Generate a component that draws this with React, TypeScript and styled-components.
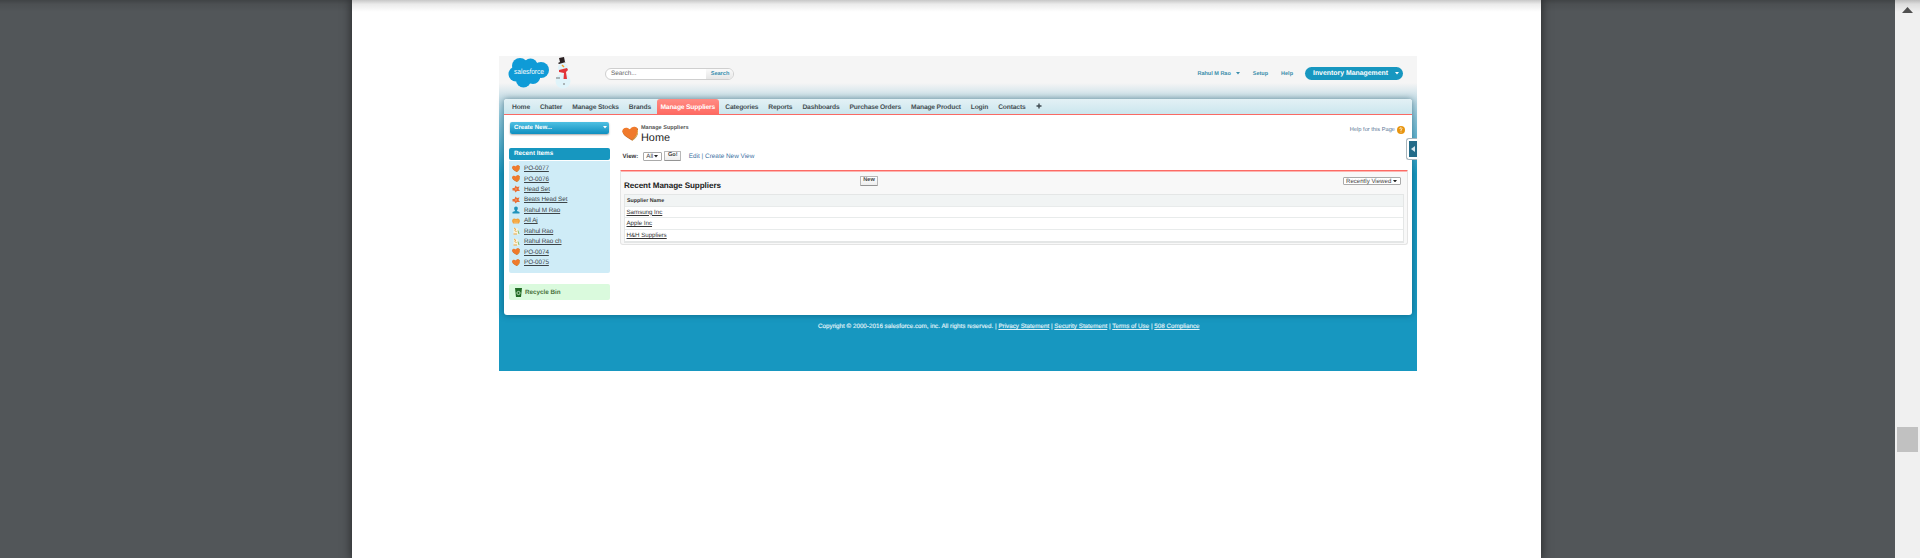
import React from 'react';
import styled, { createGlobalStyle, css } from 'styled-components';

const Global = createGlobalStyle`
  * { box-sizing: border-box; }
  body { margin: 0; background: #525659; overflow: hidden; font-family: "Liberation Sans", Arial, sans-serif; text-rendering: geometricPrecision; }
  a { color: inherit; text-decoration: underline; }
`;

const Viewer = styled.div`
  position: relative; display: flex; width: 1920px; height: 558px; background: #525659; overflow: hidden;
`;
const TopShade = styled.div`
  position: absolute; left: 0; top: 0; width: 1920px; height: 12px; pointer-events: none;
  background: linear-gradient(rgba(0,0,0,.22), rgba(0,0,0,.08) 35%, rgba(0,0,0,0));
`;
const Sheet = styled.div`
  margin-left: 352px; width: 1189px; height: 558px; background: #fff; padding: 56px 0 0 147px;
  box-shadow: 0 0 9px 1px rgba(0,0,0,.5);
`;
const Scrollbar = styled.div`
  margin-left: auto; width: 25px; height: 558px; background: #f0f0f0; display: flex; flex-direction: column; align-items: center; padding-top: 7px;
`;
const Thumb = styled.div` width: 21px; height: 25px; margin-top: 414px; background: #c1c1c1; `;

const Shot = styled.div`
  width: 918px; height: 315px; padding: 0 5px; display: flex; flex-direction: column;
  background: linear-gradient(#f5f5f5 0, #f5f5f5 27px, #c4dde6 43px, #8bc4d9 62px, #1797c0 118px);
`;
const Header = styled.header` display: flex; height: 43px; flex: none; align-items: flex-start; padding-left: 4px; `;
const Snow = styled.svg` margin-left: 4px; flex: none; `;
const Search = styled.div`
  display: flex; width: 129px; height: 12px; margin: 12px 0 0 33px; border: 1px solid #cfcfcf; border-radius: 6px; overflow: hidden;
  background: #fff; font-size: 6.4px; line-height: 10.5px; color: #666; padding-left: 5px;
`;
const SearchButton = styled.div`
  margin-left: auto; width: 27px; text-align: center; background: linear-gradient(#fafafa, #e6e6e6);
  font-size: 5.6px; font-weight: bold; color: #3a8fb0; padding-left: 1px;
`;
const UserLinks = styled.div`
  display: flex; align-items: center; margin: 11px 9px 0 auto; height: 13px; font-size: 5.5px; font-weight: bold; color: #3b8dab;
`;
const CaretSvg = styled.svg<{ $ml: number }>` flex: none; margin-left: ${p => p.$ml}px; `;
const Caret = ({ color, ml = 0 }: { color: string; ml?: number }) => (
  <CaretSvg $ml={ml} width="4" height="2.500" viewBox="0 0 4 2.500"><path d="M0 0H4L2 2.500Z" fill={color} /></CaretSvg>
);
const UserLink = styled.span<{ $ml: number }>` margin-left: ${p => p.$ml}px; `;
const AppPill = styled.div`
  display: flex; align-items: center; width: 98px; height: 13px; margin-left: 12px; padding-left: 8px; border-radius: 7px;
  background: #1797c0; color: #fff; font-size: 6.9px;
`;

const Frame = styled.div`
  height: 216px; flex: none; display: flex; flex-direction: column; border-radius: 3px; background: #fff;
  box-shadow: 0 0 6px rgba(0,50,70,.5);
`;
const Nav = styled.nav`
  display: flex; height: 16px; flex: none; padding: 0 0 0 3px; align-items: stretch; border-bottom: 1px solid #f96a64;
  border-radius: 3px 3px 0 0; background: linear-gradient(#e3f1f5, #cbe6ee);
`;
const Tab = styled.div<{ $active?: boolean }>`
  padding: 0 5px; line-height: 17px; font-size: 6.7px; letter-spacing: -.16px; font-weight: bold; color: #454f54; white-space: nowrap;
  ${p => p.$active && css`
    color: #fff; background: linear-gradient(#ff8c84, #ff6a62); border-radius: 3px 3px 0 0; margin: 0 1.5px 0 .8px; padding: 0 3.7px;
  `}
`;
const Columns = styled.div` display: flex; flex: 1; `;
const Side = styled.aside` width: 116px; flex: none; padding: 7px 0 0 5px; `;
const CreateNew = styled.div`
  display: flex; align-items: center; justify-content: space-between; width: 99px; height: 12px; margin-left: 1px; padding: 0 2px 1px 4px; border-radius: 2px;
  background: linear-gradient(#4fc0e2, #0e8fc0); color: #fff; font-size: 6.1px; font-weight: bold; box-shadow: 0 1px 2px rgba(0,0,0,.35);
`;
const RecentHead = styled.h2`
  width: 101px; height: 12px; margin: 14px 0 0; padding-left: 5px; border-radius: 2px; background: #1797c0;
  color: #fff; font-size: 6.3px; line-height: 12px;
`;
const RecentList = styled.ul`
  list-style: none; width: 101px; height: 112px; margin: 1px 0 0; padding: 2.4px 0 0 3px; border-radius: 0 0 2px 2px; background: #cfecf7;
`;
const RecentItem = styled.li`
  display: flex; align-items: center; gap: 4px; height: 10.45px; font-size: 6.35px; letter-spacing: -.08px; color: #3c4448; white-space: nowrap;
`;
const Recycle = styled.div`
  display: flex; align-items: center; gap: 3px; width: 101px; height: 16px; margin-top: 11px; padding: 1px 0 0 6px; border-radius: 2px;
  background: #dafadd; color: #4a7340; font-size: 6.3px; font-weight: bold;
`;
const Main = styled.main` flex: 1; min-width: 0; padding-right: 4px; `;
const TitleRow = styled.div` display: flex; height: 36px; padding: 9px 3px 0 1.5px; `;
const HeartSlot = styled.div` display: flex; padding-top: 2px; `;
const Titles = styled.div` margin-left: 3px; color: #222; `;
const Kicker = styled.div` font-size: 5.55px; line-height: 8.5px; font-weight: bold; color: #555; `;
const Title = styled.h1` margin: 0; font-size: 10.9px; line-height: 10.5px; font-weight: normal; `;
const HelpLink = styled.div`
  display: flex; align-items: center; gap: 2px; height: 11px; margin-left: auto; font-size: 5.7px; color: #5b7896;
`;
const ViewRow = styled.div`
  display: flex; align-items: center; height: 10px; padding-left: 2.5px; font-size: 6.1px; color: #333;
`;
const Select = styled.div<{ $w: number; $h: number; $push?: boolean }>`
  display: flex; align-items: center; justify-content: space-between; flex: none; width: ${p => p.$w}px; height: ${p => p.$h}px; padding: 0 3px 0 2px;
  border: 1px solid #aaa; border-radius: 1px; background: #fff; color: #444; font-size: 6.1px; white-space: nowrap;
  margin: ${p => p.$push ? '1px 3px 0 auto' : '1px 2px 0 5px'};
`;
const Button = styled.div<{ $w: number; $h: number }>`
  flex: none; display: flex; align-items: center; justify-content: center; width: ${p => p.$w}px; height: ${p => p.$h}px; line-height: 1;
  border: 1px solid #b8b8b8; border-bottom-color: #949494; border-radius: 1px;
  background: linear-gradient(#fff, #eee); color: #444; font-size: 5.6px; font-weight: bold;
`;
const ViewLinks = styled.div` margin-left: 7.5px; font-size: 6.4px; color: #3a6f9f; white-space: pre; `;
const Panel = styled.section`
  width: 788px; height: 75px; margin-top: 9px; padding: 0 3px 0 3px; border: 1px solid #e4e4e4; border-top: 1px solid #fc6b65;
  border-radius: 1px 1px 3px 3px; background: #f8f8f8; box-shadow: inset 0 1px 0 #fdb4b0;
`;
const PanelHead = styled.div` display: flex; height: 23px; padding-top: 5px; `;
const PanelTitle = styled.h3` width: 236px; flex: none; margin: 4.5px 0 0; font-size: 8.1px; letter-spacing: -.07px; line-height: 9px; color: #222; `;
const Table = styled.div` border: 1px solid #e4e6e6; border-bottom-width: 2px; background: #fff; `;
const Row = styled.div<{ $head?: boolean }>`
  height: 11.7px; line-height: 11px; padding-left: 1.5px; border-bottom: 1px solid #e8ebeb; font-size: 6.2px; letter-spacing: -.03px; color: #333;
  &:last-child { border: 0; height: 10.5px; }
  ${p => p.$head && css` background: #f1f4f4; font-size: 5.3px; letter-spacing: 0; line-height: 12px; font-weight: bold; padding-left: 2px; `}
`;
const Footer = styled.footer` padding: 8px 0 0 314px; white-space: nowrap; font-size: 6.28px; line-height: 8px; color: #e0f2f8; -webkit-text-stroke: .15px #e0f2f8; `;
const SideHandle = styled.div`
  position: absolute; left: 1406px; top: 138px; width: 11px; height: 22px; padding: 2px 0 2px 2px; background: #fff;
  border: 1px solid #a9b6bd; border-right: 0; border-radius: 3px 0 0 3px; display: flex;
`;
const HandleFace = styled.div` flex: 1; display: flex; align-items: center; justify-content: center; background: #236b88; `;

type Kind = 'heart' | 'set' | 'user' | 'group' | 'contact';
const Heart = ({ s }: { s: number }) => (
  <svg width={s} height={s * 0.92} viewBox="0 1 16 15" preserveAspectRatio="none">
    <path d="M10 15.500C6 13 1 11 .5 6.500C1 3 5 2 8 5C10 2 14 1 15.500 4C16.500 9 14 13 10 15.500Z" fill="#b96a2c" />
    <path d="M9.500 14.500C5 12 1 10 .3 6.300C.5 2.500 5 1.500 7.500 4.500C9 1.500 13 .5 14.800 3.500C16 8 13 12 9.500 14.500Z" fill="#f07a2c" />
    <path d="M10 15C13 13 15.500 9 15.300 5" stroke="#e9c268" strokeWidth=".9" fill="none" />
  </svg>
);
const ItemIcon = ({ kind }: { kind: Kind }) => {
  if (kind === 'heart') return <Heart s={8} />;
  return (
    <svg width="8" height="8" viewBox="0 0 16 16">
      {kind === 'set' && <><path d="M1 6L5 6L7 1L10 4L15 3L13 8L16 12L10 12L7 15L5 11L1 11Z" fill="#ea6e35" /><circle cx="8" cy="8" r="1.500" fill="#ffb088" /></>}
      {kind === 'user' && <path d="M8 1C13 1 12 7 10 9V10L15 12V15H1V12L6 10V9C4 7 3 1 8 1Z" fill="#2093bb" />}
      {kind === 'group' && <><path d="M0 8C1 2 5 2 8 4C11 2 15 2 16 8L14 13H2Z" fill="#f2a23a" /><path d="M3 8H13M4 11H12" stroke="#ffc574" /></>}
      {kind === 'contact' && <><path d="M3 1L12 3L14 15H3Z" fill="#f7f3df" /><path d="M4 2Q9 3 6 7L9 10M3 14H10" stroke="#e8a23c" strokeWidth="2" fill="none" /><path d="M12 7L14 14" stroke="#8fc06b" strokeWidth="2" /></>}
    </svg>
  );
};

const tabs = ['Home', 'Chatter', 'Manage Stocks', 'Brands', 'Manage Suppliers', 'Categories', 'Reports', 'Dashboards', 'Purchase Orders', 'Manage Product', 'Login', 'Contacts'];
const recent: [Kind, string][] = [
  ['heart', 'PO-0077'], ['heart', 'PO-0076'], ['set', 'Head Set'], ['set', 'Beats Head Set'], ['user', 'Rahul M Rao'],
  ['group', 'All Aj'], ['contact', 'Rahul Rao'], ['contact', 'Rahul Rao ch'], ['heart', 'PO-0074'], ['heart', 'PO-0075'],
];

const CloudText = styled.text` font: 7.6px "Liberation Sans", sans-serif; fill: #fff; `;

export default function App() {
  return (
    <Viewer>
      <Global />
      <Sheet>
        <Shot>
          <Header>
            <svg width="42" height="34" viewBox="0 0 42 34">
              <g fill="#0f9bd7">
                <circle cx="12" cy="10" r="8" /><circle cx="22.500" cy="9.500" r="7" /><circle cx="33" cy="14" r="8" />
                <circle cx="8" cy="18" r="7.500" /><circle cx="15.500" cy="24" r="7.500" /><circle cx="25" cy="21" r="7" /><rect x="8" y="9" width="24" height="14" />
              </g>
              <CloudText x="6" y="17.500" textLength="30" lengthAdjust="spacingAndGlyphs">sales<tspan fontStyle="italic">f</tspan>orce</CloudText>
            </svg>
            <Snow width="18" height="34" viewBox="0 0 18 34">
              <circle cx="9" cy="25" r="7.500" fill="#e0f4fa" /><circle cx="9" cy="12" r="5" fill="#e0f4fa" />
              <path d="M5 2L10 1L11 6L12 6L5 8L4 7L6 6Z" fill="#2b2022" />
              <path d="M5 14L13 12L14 14L12 16L13 23L9.500 23L10 17L5 16Z" fill="#e2353a" />
              <path d="M8 9L10 11" stroke="#f29b2b" strokeWidth="1.500" />
              <path d="M2 22H6M9 28H11" stroke="#777" />
            </Snow>
            <Search>Search...<SearchButton>Search</SearchButton></Search>
            <UserLinks>
              <span>Rahul M Rao</span><Caret color="#3b8dab" ml={5} />
              <UserLink $ml={13}>Setup</UserLink><UserLink $ml={13}>Help</UserLink>
              <AppPill>Inventory Management<Caret color="#fff" ml={7} /></AppPill>
            </UserLinks>
          </Header>
          <Frame>
            <Nav>
              {tabs.map(t => <Tab key={t} $active={t === 'Manage Suppliers'}>{t}</Tab>)}
              <Tab><svg width="6" height="6" viewBox="0 0 6 6"><path d="M3 .5V5.500M.5 3H5.500" stroke="#3f4a50" strokeWidth="1.400" /></svg></Tab>
            </Nav>
            <Columns>
              <Side>
                <CreateNew>Create New...<Caret color="#fff" /></CreateNew>
                <RecentHead>Recent Items</RecentHead>
                <RecentList>
                  {recent.map(([k, label]) => <RecentItem key={label}><ItemIcon kind={k} /><a>{label}</a></RecentItem>)}
                </RecentList>
                <Recycle>
                  <svg width="7" height="9" viewBox="0 0 7 9"><path d="M0 0H7L6 9H1Z" fill="#216b25" /><circle cx="3.500" cy="5" r="1.600" fill="none" stroke="#d8f0d8" strokeWidth=".8" /></svg>
                  Recycle Bin
                </Recycle>
              </Side>
              <Main>
                <TitleRow>
                  <HeartSlot><Heart s={16.5} /></HeartSlot>
                  <Titles><Kicker>Manage Suppliers</Kicker><Title>Home</Title></Titles>
                  <HelpLink>Help for this Page
                    <svg width="8" height="8" viewBox="0 0 8 8"><circle cx="4" cy="4" r="4" fill="#e8950f" /><path d="M2.800 3Q3 1.500 4.200 1.700Q5.800 2.200 4 4V5M4 5.700V6.500" stroke="#fff" strokeWidth=".8" fill="none" /></svg>
                  </HelpLink>
                </TitleRow>
                <ViewRow>
                  <b>View:</b>
                  <Select $w={19} $h={9}>All<Caret color="#222" /></Select>
                  <Button $w={17} $h={10}>Go!</Button>
                  <ViewLinks>Edit | Create New View</ViewLinks>
                </ViewRow>
                <Panel>
                  <PanelHead>
                    <PanelTitle>Recent Manage Suppliers</PanelTitle>
                    <Button $w={18} $h={10}>New</Button>
                    <Select $w={58} $h={8} $push>Recently Viewed<Caret color="#222" /></Select>
                  </PanelHead>
                  <Table>
                    <Row $head>Supplier Name</Row>
                    <Row><a>Samsung Inc</a></Row>
                    <Row><a>Apple Inc</a></Row>
                    <Row><a>H&amp;H Suppliers</a></Row>
                  </Table>
                </Panel>
              </Main>
            </Columns>
          </Frame>
          <Footer>
            Copyright © 2000-2016 salesforce.com, inc. All rights reserved. | <a>Privacy Statement</a> | <a>Security Statement</a> | <a>Terms of Use</a> | <a>508 Compliance</a>
          </Footer>
        </Shot>
      </Sheet>
      <Scrollbar>
        <svg width="11" height="6" viewBox="0 0 11 6"><path d="M5.500 0L11 6H0Z" fill="#505050" /></svg>
        <Thumb />
      </Scrollbar>
      <SideHandle><HandleFace><svg width="4" height="6" viewBox="0 0 4 6"><path d="M4 0V6L0 3Z" fill="#d7e8ef" /></svg></HandleFace></SideHandle>
      <TopShade />
    </Viewer>
  );
}
